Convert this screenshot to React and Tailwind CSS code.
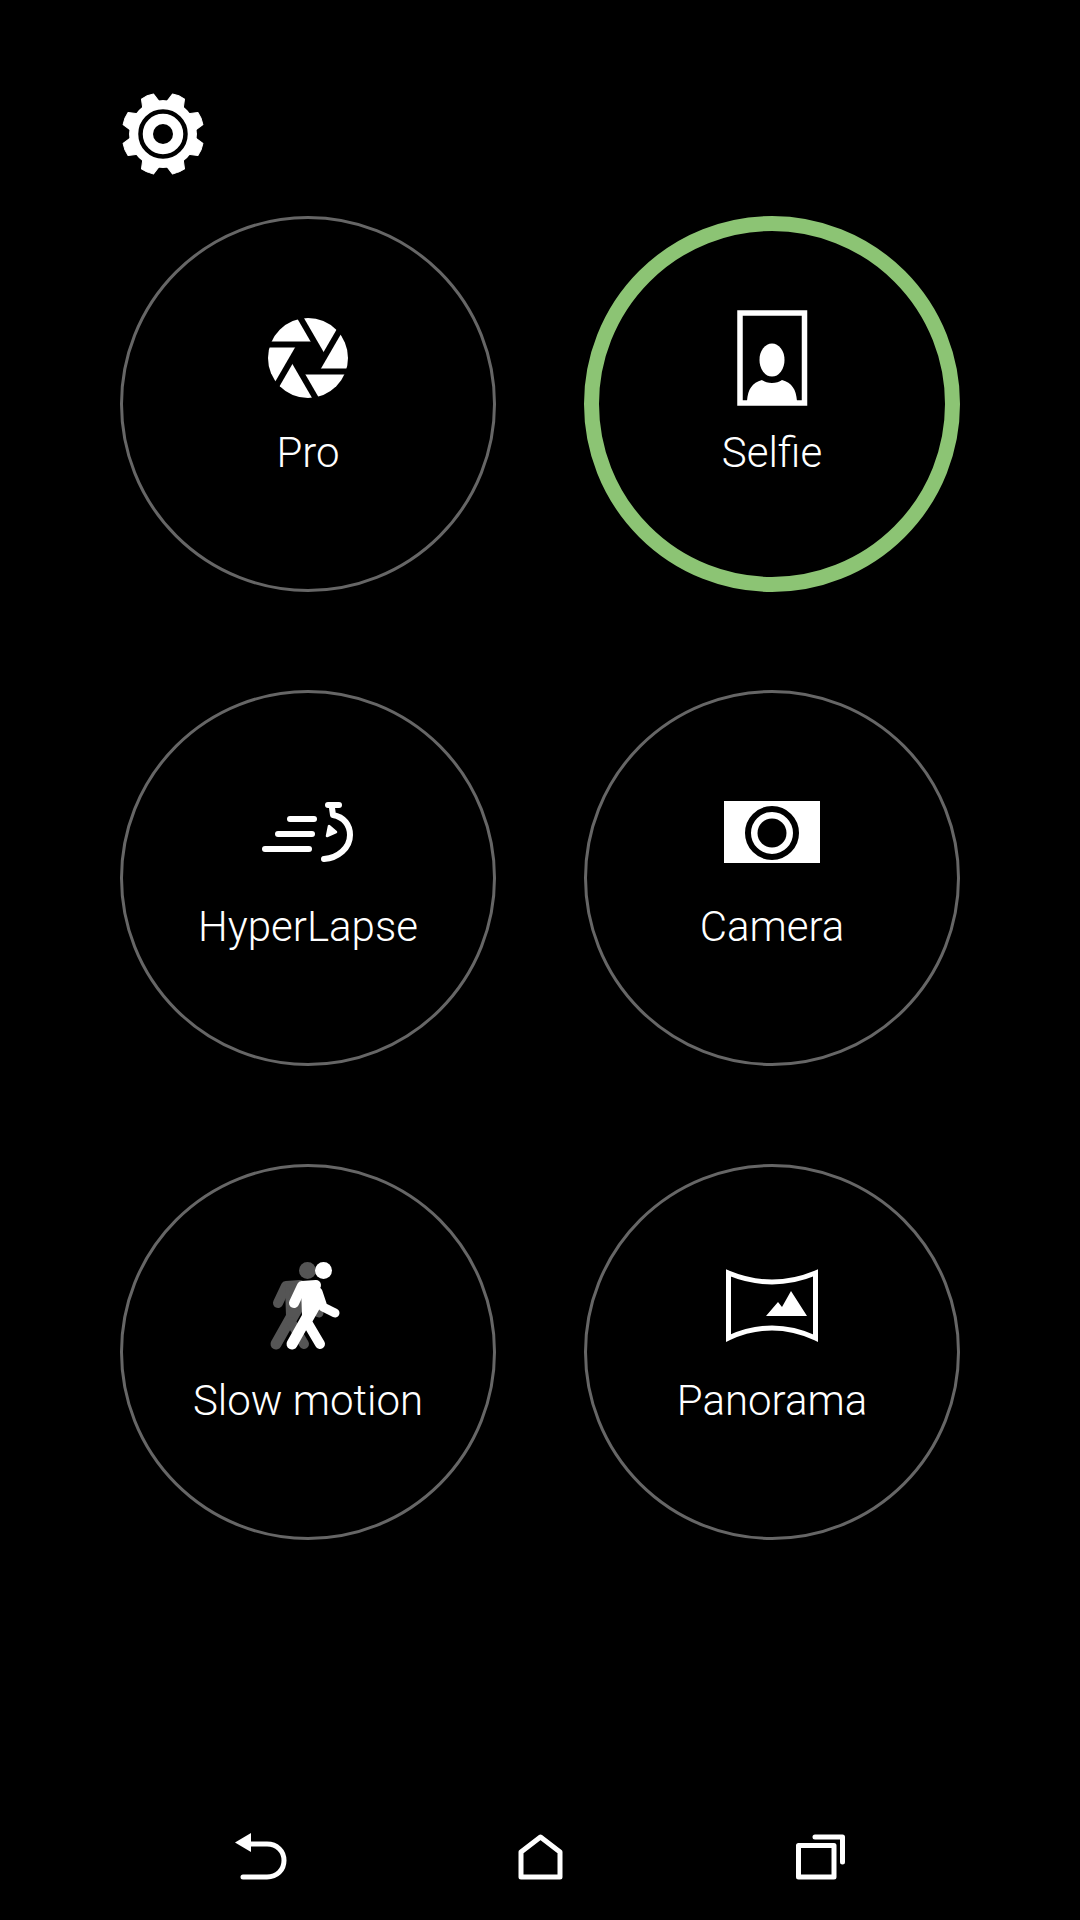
const modes = [
  { label: 'Pro', icon: ProIcon },
  { label: 'Selfie', icon: SelfieIcon, active: true },
  { label: 'HyperLapse', icon: HyperLapseIcon },
  { label: 'Camera', icon: CameraIcon },
  { label: 'Slow motion', icon: SlowMotionIcon },
  { label: 'Panorama', icon: PanoramaIcon },
];

function GearIcon() {
  const teeth = [22.5, 67.5, 112.5, 157.5, 202.5, 247.5, 292.5, 337.5];
  return (
    <svg viewBox="120 92 86 84" className="w-[86px] h-[84px]">
      <circle cx="163" cy="134" r="34" fill="#fff" />
      {teeth.map((deg) => (
        <path
          key={deg}
          d="M-9 -31 L-6.5 -40.5 Q0 -42 6.5 -40.5 L9 -31 Z"
          fill="#fff"
          stroke="#fff"
          strokeWidth="1"
          strokeLinejoin="round"
          transform={`translate(163 134) rotate(${deg})`}
        />
      ))}
      <circle cx="163" cy="134" r="22.5" fill="none" stroke="#000" strokeWidth="4.5" />
      <circle cx="163" cy="134" r="10" fill="#000" />
    </svg>
  );
}

function ProIcon() {
  const blades = [0, 60, 120, 180, 240, 300];
  return (
    <svg viewBox="248 308 120 100" className="w-[120px] h-[100px]">
      <circle cx="308" cy="358" r="40" fill="#fff" />
      <g transform="translate(308 358)">
        <polygon points="15,0 7.5,-13 -7.5,-13 -15,0 -7.5,13 7.5,13" fill="#000" />
        {blades.map((deg) => (
          <line key={deg} x1="-44" y1="-13.5" x2="9" y2="-13.5" stroke="#000" strokeWidth="6" transform={`rotate(${deg})`} />
        ))}
      </g>
    </svg>
  );
}

function SelfieIcon() {
  return (
    <svg viewBox="712 308 120 100" className="w-[120px] h-[100px]">
      <rect x="740" y="313" width="64.5" height="90" fill="none" stroke="#fff" strokeWidth="5.5" />
      <ellipse cx="772" cy="360" rx="12.5" ry="16.5" fill="#fff" />
      <path d="M747 401 C748 389 752 383 762 380 C767 384 777 384 782 380 C792 383 796 389 797 401 Z" fill="#fff" />
    </svg>
  );
}

function HyperLapseIcon() {
  return (
    <svg viewBox="248 782 120 100" className="w-[120px] h-[100px]" fill="none" stroke="#fff" strokeWidth="6" strokeLinecap="round" strokeLinejoin="round">
      <path d="M290 819 H314" />
      <path d="M278 834 H312" />
      <path d="M265 849 H309" />
      <path d="M328 805 H339" />
      <path d="M332 808 L333 815 C344 817 350 825 350 835 C350 848 338 858 324 859" />
      <path d="M329 826 L327 836 L336 832 Z" fill="#fff" strokeWidth="2.5" />
    </svg>
  );
}

function CameraIcon() {
  return (
    <svg viewBox="712 782 120 100" className="w-[120px] h-[100px]">
      <rect x="724" y="801" width="96" height="62" fill="#fff" />
      <circle cx="772" cy="833" r="24" fill="none" stroke="#000" strokeWidth="6" />
      <circle cx="772" cy="833" r="14.5" fill="#000" />
    </svg>
  );
}

function Walker({ color, dx }) {
  return (
    <g transform={`translate(${dx} 0)`} fill="none" stroke={color} strokeLinecap="round" strokeLinejoin="round">
      <circle cx="323.5" cy="1270.5" r="8.5" fill={color} stroke="none" />
      <path d="M294 1303 L302 1286 L316 1285" strokeWidth="10" />
      <path d="M318 1292 L323 1307 L335 1313" strokeWidth="9" />
      <path d="M303 1286 L318 1285 L320 1304 L311 1320 L304 1316 Z" fill={color} strokeWidth="4" />
      <path d="M310 1312 L292 1344" strokeWidth="11" />
      <path d="M307 1322 L320 1344" strokeWidth="10" />
    </g>
  );
}

function SlowMotionIcon() {
  return (
    <svg viewBox="248 1256 120 100" className="w-[120px] h-[100px]">
      <Walker color="#555" dx={-16} />
      <Walker color="#fff" dx={0} />
    </svg>
  );
}

function PanoramaIcon() {
  return (
    <svg viewBox="712 1256 120 100" className="w-[120px] h-[100px]">
      <path d="M728.5 1273 Q772 1291 815.5 1273 V1338 Q772 1318 728.5 1338 Z" fill="none" stroke="#fff" strokeWidth="5" />
      <polygon points="766,1316 778,1302 782,1307 791,1291 807,1316" fill="#fff" />
    </svg>
  );
}

function BackIcon() {
  return (
    <svg viewBox="230 1826 60 62" className="w-[60px] h-[62px]">
      <polygon points="235,1842.5 251,1833 251,1852" fill="#fff" />
      <path d="M250 1844 H267 C277 1844 284 1851 284 1860.5 C284 1870 277 1877 267 1877 H243" fill="none" stroke="#fff" strokeWidth="5" strokeLinecap="round" />
    </svg>
  );
}

function HomeIcon() {
  return (
    <svg viewBox="517.5 1826 50 62" className="w-[50px] h-[62px]">
      <path d="M540 1837 L520.5 1852 V1877 H559.5 V1852 Z" fill="none" stroke="#fff" strokeWidth="5" strokeLinejoin="round" />
    </svg>
  );
}

function RecentsIcon() {
  return (
    <svg viewBox="795 1826 55 62" className="w-[55px] h-[62px]" fill="none" stroke="#fff" strokeWidth="5" strokeLinejoin="round">
      <rect x="798.5" y="1845.5" width="35.5" height="31.5" />
      <path d="M815 1837 H842.5 V1862" strokeLinecap="round" />
    </svg>
  );
}

export default function App() {
  return (
    <div className="w-[1080px] h-[1920px] bg-black text-white flex flex-col font-['Roboto',sans-serif]">
      <div className="pt-[92px] pl-[120px] mb-[40px] h-[176px]">
        <GearIcon />
      </div>

      <div className="grid grid-cols-[376px_376px] gap-x-[88px] gap-y-[98px] pl-[120px]">
        {modes.map((mode) => {
          const Icon = mode.icon;
          return (
            <div
              key={mode.label}
              className={`w-[376px] h-[376px] rounded-full flex flex-col items-center ${
                mode.active ? 'border-[15px] border-[#8cc474] pt-[77px]' : 'border-[3px] border-[#666] pt-[89px]'
              }`}
            >
              <Icon />
              <span className="mt-[21px] text-[42px] leading-[48px] font-light">{mode.label}</span>
            </div>
          );
        })}
      </div>

      <div className="mt-auto pb-[32px] px-[230px] flex justify-between">
        <BackIcon />
        <HomeIcon />
        <RecentsIcon />
      </div>
    </div>
  );
}
